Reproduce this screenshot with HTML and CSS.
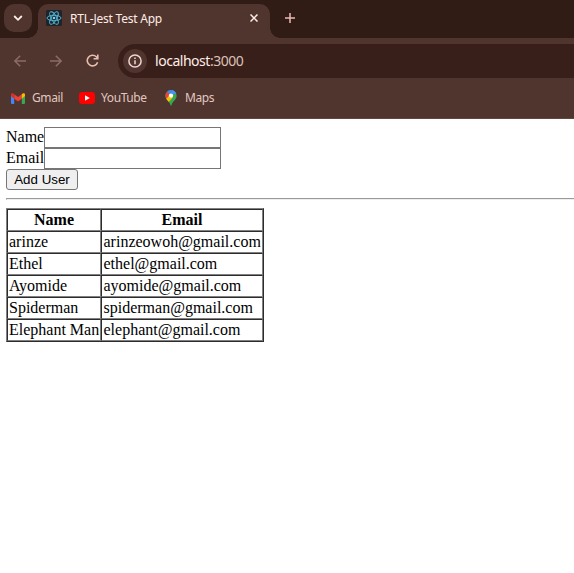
FILE: index.html
```
<!DOCTYPE html>
<html lang="en">
<head>
<meta charset="utf-8">
<title>RTL-Jest Test App</title>
<link rel="stylesheet" href="styles.css">
</head>
<body>
<header class="browser">
  <div class="tabstrip">
    <div class="tabsearch"><svg width="10" height="8" viewBox="0 0 10 8"><path d="M1.2 2 5 5.8 8.8 2" fill="none" stroke="#ffede7" stroke-width="1.8"/></svg></div>
    <div class="tab">
      <svg class="favicon" width="16" height="16" viewBox="0 0 16 16"><rect width="16" height="16" rx="1.5" fill="#20232a"/><g fill="none" stroke="#53bddb" stroke-width=".9"><ellipse cx="8" cy="8" rx="7" ry="2.7"/><ellipse cx="8" cy="8" rx="7" ry="2.7" transform="rotate(60 8 8)"/><ellipse cx="8" cy="8" rx="7" ry="2.7" transform="rotate(120 8 8)"/></g><circle cx="8" cy="8" r="1.3" fill="#61dafb"/></svg>
      <span class="title">RTL-Jest Test App</span>
      <svg class="close" width="8" height="8" viewBox="0 0 8 8"><path d="m.5.5 7 7m0-7-7 7" stroke="#ffede7" stroke-width="1.5"/></svg>
    </div>
    <svg class="plus" width="10" height="10" viewBox="0 0 10 10"><path d="M5 0v10M0 5h10" stroke="#e7bdb1" stroke-width="1.5"/></svg>
  </div>
  <div class="toolbar">
    <svg class="nav" width="12" height="12" viewBox="0 0 12 12"><path d="M12 6H1M6.2.7.9 6l5.3 5.3" fill="none" stroke="#8b6c64" stroke-width="1.5"/></svg>
    <svg class="nav forward" width="12" height="12" viewBox="0 0 12 12"><path d="M0 6h11M5.8.7 11.1 6l-5.3 5.3" fill="none" stroke="#8b6c64" stroke-width="1.5"/></svg>
    <svg class="nav reload" width="13" height="13" viewBox="0 0 13 13"><path d="M11.6 8.2A5.3 5.3 0 1 1 10.3 2.8l1.4 1.6" fill="none" stroke="#e7bdb1" stroke-width="1.6"/><path d="M12.6.5v5h-5V4h3.4V.5z" fill="#e7bdb1"/></svg>
    <div class="address">
      <div class="info"><svg width="14" height="14" viewBox="0 0 14 14"><circle cx="7" cy="7" r="6.1" fill="none" stroke="#eed7d0" stroke-width="1.5"/><path d="M7 6.2v4M7 3.5V5" stroke="#eed7d0" stroke-width="1.5"/></svg></div>
      <span class="url">localhost<i>:3000</i></span>
    </div>
  </div>
  <nav class="bookmarks">
    <svg class="gmail" width="14" height="11" viewBox="0 0 14 11"><path d="M0 2v8q0 1 1 1h2.2V4z" fill="#4285f4"/><path d="M14 2v8q0 1-1 1h-2.2V4z" fill="#34a853"/><path d="M3.2 1.2v4.6L7 8.6l3.8-2.8V1.2L7 4z" fill="#ea4335"/><path d="M0 3V1.7C0 .1 1.7-.1 2.6.7l.6.5v4.6z" fill="#d93025"/><path d="M14 3V1.7c0-1.6-1.7-1.8-2.6-1l-.6.5v4.6z" fill="#fbbc04"/></svg>
    <span class="mark m-gmail">Gmail</span>
    <svg class="youtube" width="16" height="12" viewBox="0 0 16 12"><rect width="16" height="12" rx="3" fill="red"/><path d="m6 3.2 4.8 2.8L6 8.8z" fill="#fff"/></svg>
    <span class="mark m-youtube">YouTube</span>
    <svg class="maps" width="12" height="16" viewBox="0 0 12 16"><defs><clipPath id="pin"><path d="M6 0a5.6 5.6 0 0 1 5.6 5.7C11.6 9.7 7.3 11 6.6 15c-.2 1-1 1-1.2 0C4.7 11 .4 9.7.4 5.7A5.6 5.6 0 0 1 6 0z"/></clipPath></defs><g clip-path="url(#pin)"><path d="M0 0h12v16H0z" fill="#34a853"/><path d="M0 0h12v2L5.5 6 2 1z" fill="#4285f4"/><path d="M7 0h5v3L6 5z" fill="#4a90f5"/><path d="m0 9.6 6-5.8 2 3.5-5 5.5z" fill="#fbbc04"/><path d="M0 3.8 1.8 1.8 5 4.5 1.5 8.6 0 7z" fill="#ea4335"/></g><circle cx="6" cy="5.6" r="2.1" fill="#fff"/></svg>
    <span class="mark m-maps">Maps</span>
  </nav>
</header>
<main>
  <form>
    <div class="field"><label for="name">Name</label><input id="name"></div>
    <div class="field"><label for="email">Email</label><input id="email"></div>
    <button type="button">Add User</button>
  </form>
  <hr>
  <table border="1" cellspacing="0">
    <thead><tr><th class="col-name">Name</th><th class="col-email">Email</th></tr></thead>
    <tbody>
      <tr><td>arinze</td><td>arinzeowoh@gmail.com</td></tr>
      <tr><td>Ethel</td><td>ethel@gmail.com</td></tr>
      <tr><td>Ayomide</td><td>ayomide@gmail.com</td></tr>
      <tr><td>Spiderman</td><td>spiderman@gmail.com</td></tr>
      <tr><td>Elephant Man</td><td>elephant@gmail.com</td></tr>
    </tbody>
  </table>
</main>
</body>
</html>
```
FILE: styles.css
```
* { box-sizing: border-box; }
body { margin: 0; background: #fff; color: #000; font: 16px "Liberation Serif", serif; overflow: hidden; }
svg { display: block; flex: none; }
.browser { height: 119px; background: #50342e; border-bottom: 1px solid #62463f; font-family: "Noto Sans", sans-serif; }
.tabstrip { height: 38px; padding: 4px 0 0 4px; display: flex; background: #311b15; }
.tabsearch { width: 28px; height: 28px; border-radius: 10px; background: #50342e; display: flex; align-items: center; justify-content: center; }
.tab { position: relative; width: 232px; height: 34px; margin-left: 6px; padding-left: 8px; border-radius: 10px 10px 0 0; background: #50342e; display: flex; align-items: center; }
.tab::before, .tab::after { content: ""; position: absolute; bottom: 0; width: 10px; height: 10px; }
.tab::before { right: 100%; background: radial-gradient(circle at 0 0, transparent 9.5px, #50342e 10px); }
.tab::after { left: 100%; background: radial-gradient(circle at 100% 0, transparent 9.5px, #50342e 10px); }
.favicon { margin-top: -6px; }
.title { width: 180px; margin: -5px 0 0 8px; color: #ffede7; font-size: 12px; line-height: 18px; letter-spacing: -.22px; white-space: nowrap; }
.close { margin-top: -6px; }
.plus { margin: 9px 0 0 15px; }
.toolbar { height: 40px; padding: 6px 0 0 14px; display: flex; }
.nav { margin-top: 11px; }
.forward { margin-left: 24px; }
.reload { margin: 10px 0 0 24px; }
.address { flex: 1; height: 34px; margin-left: 19px; padding: 5px; border-radius: 17px 0 0 17px; background: #391f1a; display: flex; }
.info { width: 24px; height: 24px; border-radius: 50%; background: #50342e; display: flex; align-items: center; justify-content: center; }
.url { margin-left: 8px; font-size: 14px; line-height: 24px; letter-spacing: -.47px; color: #ffede7; }
.url i { font-style: normal; color: #dcc1b8; }
.bookmarks { height: 40px; padding-left: 11px; display: flex; align-items: center; }
.mark { color: #e0c8c0; font-size: 12px; line-height: 18px; letter-spacing: -.4px; white-space: nowrap; }
.m-gmail { width: 40px; margin-left: 7px; }
.youtube { margin-left: 7px; }
.m-youtube { width: 57px; margin-left: 6px; }
.maps { margin-left: 7px; }
.m-maps { margin-left: 8px; }
main { padding: 8px 0 0 6px; }
.field { height: 21px; display: flex; }
.field label { width: 38px; line-height: 20px; }
input { width: 177px; height: 21px; margin: 0; padding: 1px 2px; border: 1px solid #767676; border-radius: 0; background: #fff; }
button { display: block; width: 72px; height: 21px; padding: 0; border: 1px solid #767676; border-radius: 3px; background: #efefef; color: #000; font: 13.333px "Liberation Sans", sans-serif; }
hr { height: 2px; margin: 8px 0; border: solid; border-width: 1px 0 1px 1px; border-color: #9a9a9a #eee #eee #9a9a9a; }
table { width: 258px; table-layout: fixed; border-color: #808080; line-height: 18px; }
td, th { height: 22px; padding: 1px; white-space: nowrap; }
td + td { padding-left: 1.5px; }
.col-name { width: 94px; }
```
